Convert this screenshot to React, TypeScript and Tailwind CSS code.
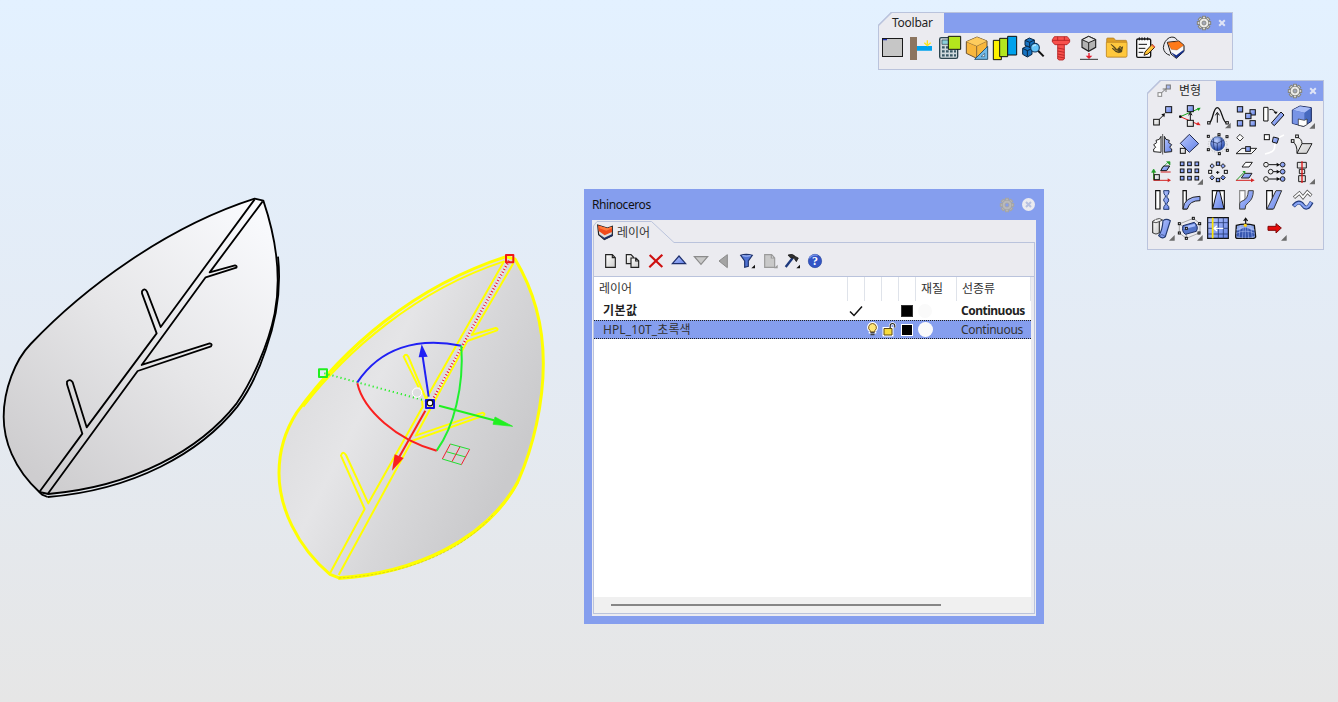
import React from 'react';

type Pt = [number, number];

const leafA =
  'M790 32C830 150 845 260 824 370 805 465 755 575 710 640 600 780 400 890 145 912L118 906C40 835 11 750 11 680 11 600 45 510 92 462 250 295 500 110 764 26Z';
const leafAEdge = 'M834 200C845 300 829 390 797 480 774 550 749 600 712 650 600 790 400 900 143 921';

const leafB =
  'M735 57C800 165 820 280 820 370 820 490 790 620 745 722 650 900 430 1000 205 1013L180 1003C80 920 27 800 27 700 27 630 50 565 80 518 220 325 430 140 708 50Z';

function Viewport() {
  return (
    <svg className="absolute inset-0" width="1338" height="702" viewBox="0 0 1338 702">
      <defs>
        <linearGradient id="la" gradientUnits="userSpaceOnUse" x1="780" y1="70" x2="110" y2="860">
          <stop offset="0" stopColor="#f9fafd" />
          <stop offset=".5" stopColor="#e6e6e8" />
          <stop offset="1" stopColor="#cecdcf" />
        </linearGradient>
        <linearGradient id="lb" gradientUnits="userSpaceOnUse" x1="130" y1="450" x2="700" y2="740">
          <stop offset="0" stopColor="#dfdfe1" />
          <stop offset=".25" stopColor="#e5e5e7" />
          <stop offset=".6" stopColor="#d7d7d9" />
          <stop offset="1" stopColor="#cacacc" />
        </linearGradient>
      </defs>
      <g transform="translate(0 190) scale(.33333)" strokeLinejoin="round" stroke="#000" strokeWidth="5.5" fill="none">
        <path d={leafA} fill="url(#la)" />
        <path d={leafAEdge} />
        <path d="M118 906 126 914 143 921" />
        <path d="M764 28 482 411 441 305Q434 292 426 304V310L470 430 260 712 218 577Q210 565 201 575V583L247 731 118 906" />
        <path d="M788 34 629 247 705 226Q712 228 709 233L617 262 425 525 629 460Q638 461 633 469L413 543 143 912" />
      </g>
      <g transform="translate(270 240) scale(.33333)" strokeLinejoin="round" fill="none">
        <g stroke="#ff0" strokeWidth="6">
          <path d={leafB} fill="url(#lb)" strokeWidth="9" />
          <path d="M100 500C228 335 435 152 700 65" strokeWidth="6" />
          <path d="M745 726C650 904 430 1004 205 1017" />
          <path d="M668 826C570 940 400 1005 205 1014" stroke="#b3b31f" strokeWidth="1.5" strokeDasharray="8 4" />
          <path d="M703 62 468 477 415 350Q408 338 401 350L446 442M456 482 458 500 295 790 228 645Q218 631 213 647L284 807 180 1000" />
          <path d="M730 70 605 285 677 264Q686 266 681 271L592 303 437 587 638 518Q647 520 641 527L425 603 206 1005" />
        </g>
        <path d="M717 62 485 485" stroke="#fff" strokeWidth="8" opacity=".4" />
        <path d="M717 62 485 485" stroke="#f01030" strokeWidth="7.5" strokeDasharray="3 6.5" />
        <path d="M163 400 470 483" stroke="#20f020" strokeWidth="6" strokeDasharray="3.500 9" />
        <path d="M262 427C330 325 440 290 574 317" stroke="#2020f4" strokeWidth="6" />
        <path d="M574 317C582 440 552 560 500 632" stroke="#20f030" strokeWidth="6" />
        <path d="M262 430C280 510 380 600 500 632" stroke="#fa2020" strokeWidth="6" />
        <path d="M476 470 458 350" stroke="#2020f4" strokeWidth="6" />
        <path d="M455 313 446 352 473 350Z" fill="#2020f4" />
        <path d="M507 497 672 541" stroke="#20f020" strokeWidth="6" />
        <path d="M728 559 675 531 669 553Z" fill="#20f020" stroke="#20f020" strokeWidth="2" />
        <path d="M466 512 388 650" stroke="#fa2020" strokeWidth="6" />
        <path d="M366 692 374 643 401 654Z" fill="#fa2020" />
        <circle cx="441" cy="458" r="14" stroke="#fff" strokeWidth="3" />
        <g strokeWidth="3">
          <path d="M541 612 599 628M529 635 587 651M517 657 574 674" stroke="#20e030" />
          <path d="M541 612 517 657M570 620 546 665M599 628 574 674" stroke="#f02030" />
        </g>
        <rect x="468" y="480" width="24" height="24" fill="#f4ec80" stroke="#1010e0" strokeWidth="6" />
        <circle cx="480" cy="489" r="8.5" fill="#fff" stroke="#111" strokeWidth="3.500" />
        <rect x="708" y="45" width="22" height="22" stroke="#f01818" strokeWidth="6" />
        <rect x="147" y="388" width="24" height="23" stroke="#20f020" strokeWidth="6" />
      </g>
    </svg>
  );
}

function Gradients() {
  return (
    <svg className="absolute size-0">
      <defs>
        <linearGradient id="blu" x1="0" y1="0" x2="1" y2="1">
          <stop offset="0" stopColor="#b9c8ff" />
          <stop offset="1" stopColor="#6281e6" />
        </linearGradient>
        <linearGradient id="gry" x1="0" y1="0" x2="1" y2="1">
          <stop offset="0" stopColor="#fff" />
          <stop offset="1" stopColor="#ccc" />
        </linearGradient>
        <radialGradient id="ball" cx=".4" cy=".3" r=".7">
          <stop offset="0" stopColor="#c3d5ff" />
          <stop offset="1" stopColor="#2448b0" />
        </radialGradient>
      </defs>
    </svg>
  );
}

const B = 'url(#blu)';
const G = 'url(#gry)';

function Cog({ size = 16, fill = '#ecebe8', stroke = '#85857d', hole = '#a3a8b9' }: { size?: number; fill?: string; stroke?: string; hole?: string }) {
  return (
    <svg width={size} height={size} viewBox="-12 -12 24 24" className="shrink-0">
      <g fill={fill} stroke={stroke} strokeWidth="1.6" strokeLinejoin="round">
        {[0, 45, 90, 135].map((a) => (
          <rect key={a} x="-2.3" y="-10" width="4.6" height="20" transform={`rotate(${a})`} />
        ))}
        <circle r="7.2" />
      </g>
      <circle r="6.4" fill={fill} />
      <circle r="3" fill={hole} stroke={stroke} strokeWidth="1.3" />
    </svg>
  );
}

function CloseX() {
  return (
    <svg width="8" height="8" viewBox="0 0 8 8" className="shrink-0">
      <path d="M1.2 1.2 6.8 6.8M6.8 1.2 1.2 6.8" stroke="#dfe4f6" strokeWidth="2" />
    </svg>
  );
}

/** Rows of little squares used by several array tools. */
function Sq({ at, s = 12, fill = B }: { at: Pt[]; s?: number; fill?: string }) {
  return (
    <>
      {at.map(([x, y]) => (
        <rect key={`${x}-${y}`} x={x} y={y} width={s} height={s} fill={fill} stroke="#111" strokeWidth="3" />
      ))}
    </>
  );
}

const Corner = ({ x, y }: { x: number; y: number }) => <path d={`M${x} ${y}v-17l-17 17z`} fill="#6b6b6b" stroke="none" />;

const mainIcons: React.ReactNode[] = [
  <>
    <rect x="37.500" y="100.500" width="60" height="54" fill="#c6c6c6" stroke="#1a1a1a" strokeWidth="3" />
    <path d="M39 104h12" stroke="#2030b0" strokeWidth="4" />
  </>,
  <>
    <path d="M120 96h21v69h-21z" fill="#8c7560" />
    <path d="M141 123h45v14h-45z" fill="#00a2ec" />
    <path d="M172 106v14M163 113l9 9 10-9" stroke="#fce51a" strokeWidth="4" fill="none" />
  </>,
  <>
    <rect x="209" y="98" width="54" height="62" rx="5" fill="#cfd9dd" stroke="#2c444e" strokeWidth="4" />
    <path d="M216 105h22v13h-22z" fill="#8cd0da" stroke="#2c444e" strokeWidth="2" />
    <path d="M216 127h8M228 127h8M216 139h8M228 139h8M240 139h8M216 151h8M228 151h8M240 151h8M252 139h6M252 151h6" stroke="#3a5966" strokeWidth="7" />
    <path d="M235 94h37v39h-37z" fill="#b4e61d" stroke="#111" strokeWidth="3" />
  </>,
  <>
    <path d="M289 110 321 96 351 108V143L320 160 289 145Z" fill="#f8b73c" stroke="#6b5130" strokeWidth="3" />
    <path d="M289 110 320 123 351 108M320 123V160" fill="none" stroke="#8a6833" strokeWidth="3" />
    <path d="M289 110 321 96 351 108 320 123Z" fill="#ffd165" opacity=".8" />
    <path d="M353 124V163H314Z" fill="#70b9e8" stroke="#2b5673" strokeWidth="3" />
    <path d="M344 145v10h-11z" fill="#ebebf0" stroke="#2b5673" strokeWidth="2" />
  </>,
  <g stroke="#111" strokeWidth="3">
    <path d="M370 106h24v58h-24z" fill="#fff200" />
    <path d="M389 100h24v55h-24z" fill="#b4e61d" />
    <path d="M413 94h27v56h-27z" fill="#00a2ec" />
  </g>,
  <>
    <g stroke="#09243f" strokeWidth="3" fill="#1673c2">
      <path d="M465 106 478 99 493 105V120L479 128 465 121Z" />
      <path d="M458 130 471 123 486 131V148L472 156 458 148Z" />
      <path d="M465 106 479 112 493 105M479 112V127M458 130 472 137 486 131M472 137V154" fill="none" />
    </g>
    <circle cx="495" cy="128" r="13" fill="#65c5fa" stroke="#123a63" strokeWidth="3.500" />
    <path d="M505 138 521 154" stroke="#111" strokeWidth="6" />
    <path d="M488 125q4-6 10-5" stroke="#e1f6ff" strokeWidth="3" fill="none" />
  </>,
  <g stroke="#b12020" strokeWidth="2.500" fill="#f8504c">
    <path d="M563 117h20v45l-4 3h-12l-4-3z" />
    <path d="M547 104 553 95H592L599 104V111L591 119H555L547 111Z" />
    <path d="M547 106H599M563 106V95M583 106V95M563 129l20 4M563 138l20 4M563 147l20 4M563 155l20 4" fill="none" />
  </g>,
  <>
    <path d="M636 104 656 94 677 104V127L656 139 636 127Z" fill="#b3b3b3" stroke="#222" strokeWidth="3.500" />
    <path d="M636 104 656 113 677 104 656 94Z" fill="#e2e2e2" stroke="#222" strokeWidth="3" />
    <path d="M656 113V139" stroke="#222" strokeWidth="3" />
    <path d="M657 144v10" stroke="#e31c2c" strokeWidth="4" />
    <path d="M647 152h20l-10 10z" fill="#e31c2c" />
    <path d="M630 163h54" stroke="#333" strokeWidth="3" />
  </>,
  <>
    <path d="M710 102q0-3 3-3h18l6 7h30q3 0 3 3v44q0 3-3 3h-54q-3 0-3-3z" fill="#dfa023" stroke="#a9761b" strokeWidth="2" />
    <path d="M709 112h62v41q0 3-3 3h-56q-3 0-3-3z" fill="#ffc83d" stroke="#b98222" strokeWidth="2" />
    <path d="M723 118 733 125 741 134 751 123 750 130 758 125 755 141 746 143 737 140 726 130 738 134Z" fill="#51451f" stroke="#332b15" strokeWidth="1.500" />
    <path d="M733 134 745 139M748 127 755 133" stroke="#ffc83d" strokeWidth="1.500" />
  </>,
  <>
    <rect x="800" y="102" width="42" height="55" rx="4" fill="#fafafa" stroke="#111" strokeWidth="4" />
    <path d="M808 97v9M816 97v9M824 97v9M833 97v9M806 118h25M806 130h20M806 142h14" stroke="#111" strokeWidth="3" />
    <path d="M825 141 846 118 855 126 834 147 822 151Z" fill="#ffc63a" stroke="#3a2715" strokeWidth="3" />
    <path d="M844 121l8 8 4-4-8-7z" fill="#e8684a" />
  </>,
  <>
    <path d="M922 106Q914 92 898 98 882 107 880 128 882 146 900 151" fill="none" stroke="#222" strokeWidth="3" />
    <path d="M892 112 927 108 942 121V139L919 160 903 147Z" fill="#f8f8f8" stroke="#111" strokeWidth="3" />
    <path d="M893 113 927 109 941 121 921 135 904 133Z" fill="#ff7a1a" stroke="#7c3508" strokeWidth="1" />
    <path d="M902 141 919 151 941 134V140L919 160Z" fill="#17308c" />
  </>,
];

const transformIcons: React.ReactNode[][] = [
  [
    <>
      <path d="M59 132 71 120" stroke="#111" strokeWidth="3" />
      <path d="M75 115l-2 12-9-9z" fill="#111" />
      <Sq at={[[41, 133]]} s={17} fill={G} />
      <Sq at={[[77, 95]]} s={18} />
    </>,
    <>
      <path d="M121 125 174 102" stroke="#18a018" strokeWidth="3" />
      <path d="M121 125 174 148" stroke="#e02020" strokeWidth="3" />
      <path d="M182 98l-11 1 5 9z" fill="#14a01c" />
      <path d="M182 151l-8-11-5 10z" fill="#e02020" />
      <path d="M151 136V115M146 121l5-9 5 9" stroke="#111" strokeWidth="3" fill="none" />
      <circle cx="121" cy="125" r="4" />
      <Sq at={[[142, 92]]} s={18} />
      <Sq at={[[142, 136]]} s={18} fill={G} />
    </>,
    <>
      <path d="M206 145C220 142 218 98 232 98S246 142 261 145" fill="none" stroke="#111" strokeWidth="4" />
      <path d="M232 143V115M226 121l6-9 6 9" fill="none" stroke="#111" strokeWidth="3" />
      <Sq at={[[203, 140], [258, 140]]} s={7} fill="#fff" />
      <Corner x={272} y={160} />
    </>,
    <Sq at={[[292, 95], [330, 104], [317, 115], [292, 137], [330, 137]]} s={16} />,
    <>
      <path d="M371 97h13v41h-13z" fill="#fff" stroke="#111" strokeWidth="3" />
      <path d="M388 104q13-3 18 8" fill="none" stroke="#111" strokeWidth="3" />
      <path d="M400 110h13l-5 8z" fill="#111" />
      <path d="M394 144 423 111 432 120 403 152Z" fill={B} stroke="#111" strokeWidth="3" />
    </>,
    <>
      <path d="M457 105 480 93 514 98V139L491 154 457 145Z" fill="#4669bf" stroke="#18265c" strokeWidth="3" />
      <path d="M458 105 480 94 513 99 493 113Z" fill="#a9bdf8" />
      <path d="M458 105 493 113V153L458 145Z" fill="#7894e6" />
      <path d="M475 132 493 136 501 132V149L491 154 475 151Z" fill="#fff" stroke="#222" strokeWidth="2" />
      <Corner x={525} y={161} />
    </>,
  ],
  [
    <>
      <path d="M63 184V232L41 230V222L47 217 41 209 50 203 48 196 58 193Z" fill="#fff" stroke="#222" strokeWidth="3" />
      <path d="M73 184V232L95 230V222L89 217 95 209 86 203 88 196 78 193Z" fill={B} stroke="#222" strokeWidth="3" />
      <path d="M68 178V239" stroke="#111" strokeWidth="3" strokeDasharray="4 2" />
    </>,
    <>
      <path d="M148 178 176 206 148 232 121 205Z" fill={B} stroke="#20284a" strokeWidth="3" />
      <Sq at={[[121, 220]]} s={15} fill={G} />
    </>,
    <>
      <ellipse cx="233" cy="208" rx="28" ry="24" fill="none" stroke="#aaa" strokeWidth="2" strokeDasharray="4 4" />
      <circle cx="233" cy="206" r="21" fill="url(#ball)" stroke="#254580" strokeWidth="2" />
      <path d="M213 199 232 205 252 195M232 205V227M220 190Q220 215 224 224M243 188Q247 205 243 223" fill="none" stroke="#16275d" strokeWidth="2" />
      <Sq at={[[202, 181], [234, 176], [258, 182], [202, 221], [235, 233], [259, 223]]} s={6} fill="#fff" />
    </>,
    <>
      <path d="M300 178 310 188 300 198 290 188Z" fill="#fff" stroke="#333" strokeWidth="3" />
      <path d="M288 236 306 220H350L334 236Z" fill="#f7f7f7" stroke="#222" strokeWidth="3" />
      <Sq at={[[317, 215]]} s={14} />
    </>,
    <>
      <path d="M375 237Q405 232 404 214 405 190 432 180" fill="none" stroke="#fff" strokeWidth="5" />
      <Sq at={[[373, 179]]} s={15} fill="#fff" />
      <path d="M400 186 416 190 411 205 397 201Z" fill={B} stroke="#111" strokeWidth="3" />
    </>,
    <>
      <path d="M458 200Q472 208 471 235H500L516 206H486Q486 192 472 186" fill={G} stroke="#222" strokeWidth="3" />
      <path d="M471 235 486 206" fill="none" stroke="#222" strokeWidth="3" />
      <Sq at={[[467, 180], [454, 194]]} s={8} fill="#fff" />
    </>,
  ],
  [
    <>
      <path d="M41 67V40M41 67H84" stroke="#d42323" strokeWidth="3" />
      <path d="M41 64V41" stroke="#209c28" strokeWidth="3" />
      <path d="M35 43h12l-6-10zM63 32l22-20M80 11h10v10z" fill="#209c28" stroke="#209c28" strokeWidth="2" />
      <path d="M83 61v12l10-6z" fill="#d42323" />
      <path d="M62 38 71 24H89L80 38Z" fill={B} stroke="#111" strokeWidth="3" />
      <path d="M62 42H92" stroke="#d42323" strokeWidth="3" />
      <Sq at={[[43, 50]]} s={15} fill={G} />
    </>,
    <>
      <Sq at={[[121, 12], [143, 12], [165, 12], [121, 33], [143, 33], [121, 55], [143, 55], [165, 33], [165, 55]]} s={11} />
      <Corner x={189} y={80} />
    </>,
    <>
      <Sq at={[[229, 12], [229, 61]]} s={10} />
      <Sq at={[[253, 37], [206, 37]]} s={9} fill="#fff" />
      <path d="M216 17l7 7-7 7-6-7zM249 17l7 7-7 7-7-7zM216 52l7 7-7 7-6-7zM249 52l7 7-7 7-7-7z" fill={B} stroke="#222" strokeWidth="3" />
      <path d="M233 39v9M228 43h10" stroke="#111" strokeWidth="3" />
    </>,
    <>
      <path d="M306 27 317 13H337L327 27Z" fill="#fff" stroke="#222" strokeWidth="3" />
      <path d="M304 60 314 46H336L327 60Z" fill={B} stroke="#222" strokeWidth="3" />
      <path d="M289 67 312 43" stroke="#209c28" strokeWidth="3" />
      <path d="M307 39h9v9z" fill="#209c28" />
      <path d="M288 67H336" stroke="#d42323" strokeWidth="3" />
      <path d="M333 61v12l11-6z" fill="#d42323" />
    </>,
    <>
      <path d="M386 20h33M399 41h20M386 63h33" stroke="#111" strokeWidth="3" />
      <path d="M410 14l10 6-10 6zM410 35l10 6-10 6zM410 57l10 6-10 6z" fill="#111" />
      <g stroke="#222" strokeWidth="3">
        <g fill="#eee"><circle cx="378" cy="20" r="7" /><circle cx="392" cy="41" r="7" /><circle cx="378" cy="63" r="7" /></g>
        <g fill={B}><circle cx="428" cy="20" r="7" /><circle cx="428" cy="41" r="7" /><circle cx="428" cy="63" r="7" /></g>
      </g>
    </>,
    <>
      <g fill="#e3e3e3" stroke="#222" strokeWidth="3">
        <path d="M472 13h27v17h-27zM478 34h16v13h-16zM476 53h20v18h-20z" />
      </g>
      <path d="M486 10V75" stroke="#e01616" strokeWidth="4" />
      <Corner x={525} y={79} />
    </>,
  ],
  [
    <>
      <path d="M47 98h13v55H47z" fill="#fff" stroke="#111" strokeWidth="3.500" />
      <path d="M71 98H87V102Q86 110 81 113V119Q87 121 86 127T81 135V140Q88 144 87 154H71Q70 145 76 140V134Q71 131 71 126T76 118V113Q71 110 71 98Z" fill={B} stroke="#1e3870" strokeWidth="3" />
    </>,
    <>
      <path d="M129 98h10v55h-10z" fill="#fff" stroke="#111" strokeWidth="3.500" />
      <path d="M129 153Q132 116 180 115V128Q149 127 142 153Z" fill={B} stroke="#222" strokeWidth="3" />
    </>,
    <>
      <path d="M217 98h36v55h-36z" fill="#fff" stroke="#111" strokeWidth="3.500" />
      <path d="M231 99h8l13 53h-34z" fill={B} stroke="#111" strokeWidth="3" />
    </>,
    <>
      <path d="M299 98h16v55h-16z" fill="#fff" stroke="#888" strokeWidth="3.500" />
      <path d="M299 153V137Q300 130 309 128 324 123 325 98H340Q340 123 325 134 315 140 315 153Z" fill={B} stroke="#444" strokeWidth="3" />
    </>,
    <>
      <path d="M380 98h17v55h-17z" fill="#fff" stroke="#111" strokeWidth="3.500" />
      <path d="M408 98h17l-24 55h-20z" fill={B} stroke="#333" strokeWidth="3" />
    </>,
    <>
      <path d="M462 119 478 105 489 118 502 102 514 113" fill="none" stroke="#555" strokeWidth="10" />
      <path d="M463 118 478 105 489 118 502 102 513 112" fill="none" stroke="#fff" strokeWidth="5" />
      <path d="M460 145 Q477 124 489 142T515 132" fill="none" stroke="#223a7c" strokeWidth="12" />
      <path d="M462 144 Q477 126 489 142T513 133" fill="none" stroke="#88a4f4" strokeWidth="7" />
    </>,
  ],
  [
    <>
      <path d="M38 191V224Q48 232 58 224V190Q48 181 38 191Z" fill={G} stroke="#333" strokeWidth="3.500" />
      <path d="M39 192Q48 197 57 191L68 186Q58 178 48 184" fill="#eee" stroke="#333" strokeWidth="2.500" />
      <path d="M69 188Q79 180 91 188L76 236Q68 245 56 233Q67 218 69 188Z" fill={B} stroke="#253b70" strokeWidth="3.500" />
      <path d="M59 234Q64 225 76 236" fill="none" stroke="#253b70" strokeWidth="2" />
      <Corner x={104} y={248} />
    </>,
    <>
      <path d="M118 198 160 181 180 197 180 224 139 241 118 225ZM118 198 139 210 180 197M139 210V241" fill="none" stroke="#999" strokeWidth="2.500" />
      <path d="M129 203 163 193Q177 206 169 220L136 229Q124 220 129 203Z" fill="#5474c8" stroke="#1c2d64" strokeWidth="3" />
      <path d="M134 205 164 197 166 205 132 214Z" fill="#a9bfff" />
      <Sq at={[[157, 178], [115, 194], [176, 194], [136, 208], [115, 222], [136, 238], [174, 222]]} s={6} fill="#fff" />
      <Corner x={188} y={248} />
    </>,
    <>
      <path d="M203 179h62v62h-62z" fill={B} stroke="#111" strokeWidth="3.500" />
      <path d="M203 194H265M203 211H265M203 228H265M250 179V241M235 179V241" stroke="#263b74" strokeWidth="2.500" />
      <path d="M218 179v62" stroke="#ffe500" strokeWidth="5" />
      <path d="M222 211h28M231 203l-9 8 9 8" fill="none" stroke="#fff" strokeWidth="4" />
    </>,
    <>
      <path d="M289 202Q316 195 343 202L347 237Q345 241 341 241H290Q286 240 287 235Z" fill="#8fa8e9" stroke="#111" strokeWidth="4" />
      <path d="M291 218Q302 217 316 203 330 217 343 218V235Q316 243 290 235Z" fill="#3655af" />
      <path d="M301 202 297 240M310 208 307 241M323 208 326 241M332 202 337 240M288 226Q316 213 345 226M288 216Q316 200 344 216M316 205V241" stroke="#b9cbff" strokeWidth="1.500" fill="none" />
      <path d="M317 200V184M311 189l6-8 6 8" stroke="#111" strokeWidth="3.500" fill="none" />
      <circle cx="316" cy="202" r="5" fill="#ffd51a" />
    </>,
    <>
      <path d="M384 205H408V197L424 210 408 225V217H384Z" fill="#e40b0b" stroke="#7e0909" strokeWidth="3" />
      <Corner x={440} y={248} />
    </>,
  ],
];

function ToolWindow({ className, tab, title, icon, children }: { className: string; tab: string; title: string; icon?: React.ReactNode; children: React.ReactNode }) {
  return (
    <section className={`absolute flex flex-col border border-[#bac3dc] bg-[#ebebf0] ${className}`} style={{ clipPath: 'polygon(0 13px, 13px 0, 100% 0, 100% 100%, 0 100%)' }}>
      <svg className="absolute -top-px -left-px" width="14" height="14" viewBox="0 0 14 14">
        <path d="M0 13.500 13.500 0" stroke="#bac3dc" strokeWidth="2" />
      </svg>
      <header className="flex h-[20px] shrink-0 bg-[#859eee]">
        <div className={`flex items-center bg-[#ebebf0] text-[12px] text-[#1f1f1f] ${tab}`}>
          {icon}
          <span className={icon ? 'pl-[7px]' : 'pl-[13px] tracking-[-0.25px]'}>{title}</span>
        </div>
        <div className="flex flex-1 items-center justify-end gap-[6px] pr-[6px]">
          <Cog />
          <CloseX />
        </div>
      </header>
      {children}
    </section>
  );
}

function MainToolbar() {
  return (
    <ToolWindow className="top-[12px] left-[878px] h-[58px] w-[355px]" tab="w-[65px]" title="Toolbar">
      <div className="-ml-px flex pt-px">
        {mainIcons.map((icon, i) => (
          <svg key={i} width="28" height="28" viewBox={`${24 + 84 * i} 87 84 84`}>{icon}</svg>
        ))}
      </div>
    </ToolWindow>
  );
}

function TransformToolbar() {
  const tabIcon = (
    <svg className="ml-[9px] shrink-0" width="15" height="14" viewBox="52 28 45 42">
      <path d="M64 56 78 43M69 43h10v9" stroke="#777" strokeWidth="3" fill="none" />
      <rect x="55" y="54" width="11" height="11" fill="#fff" stroke="#888" strokeWidth="3" />
      <rect x="80" y="31" width="12" height="12" fill="#a9b9ef" stroke="#777" strokeWidth="3" />
    </svg>
  );
  return (
    <ToolWindow className="top-[80px] left-[1147px] h-[170px] w-[177px]" tab="w-[68px]" title="변형" icon={tabIcon}>
      <div className="grid grid-cols-[repeat(6,28px)] pt-px">
        {transformIcons.flatMap((row, r) =>
          row.map((icon, c) => (
            <svg key={`${r}-${c}`} width="28" height="28" viewBox={`${24 + 84 * c} ${r < 2 ? 81 + 84 * r : 84 * (r - 2)} 84 84`}>{icon}</svg>
          )),
        )}
      </div>
    </ToolWindow>
  );
}

/** Toolbar of the layer list; the strip is drawn in one 3:1 coordinate space. */
const layerTools: [number, number, React.ReactNode][] = [
  [60, 66, <path key="n" d="M77 209H97L106 218V247H77Z M97 209V218H106" fill={G} stroke="#222" strokeWidth="3.500" />],
  [126, 66, <g key="c" fill={G} stroke="#222" strokeWidth="3.500"><path d="M139 209H153L160 216V236H139Z" /><path d="M153 219H168L176 227V247H153Z M167 219V228H176" /></g>],
  [192, 72, <path key="x" d="M209 210 247 246M247 209 208 247" fill="none" stroke="#ce1010" strokeWidth="6.500" />],
  [264, 66, <path key="u" d="M277 236 297 213 317 236Z" fill={B} stroke="#1e2f6d" strokeWidth="3.500" />],
  [330, 66, <path key="d" d="M343 215H383L363 238Z" fill="#c9c9c9" stroke="#8b8b8b" strokeWidth="3.500" />],
  [396, 66, <path key="l" d="M442 209V248L417 228Z" fill="#a4a4a4" stroke="#8b8b8b" strokeWidth="3" />],
  [462, 75, <g key="f"><path d="M482 211Q498 205 517 211L505 228V244L494 247V228Z" fill="#4f72d2" stroke="#20346e" strokeWidth="3.500" /><path d="M487 212Q499 215 512 212" stroke="#b7caff" strokeWidth="3" fill="none" /><path d="M525 250v-11l-11 11z" fill="#111" /></g>],
  [537, 66, <g key="g"><path d="M554 209H575L584 219V247H554Z M574 209V219H584" fill="#c9c9c9" stroke="#9a9a9a" strokeWidth="3.500" /><path d="M593 250v-11l-11 11z" fill="#999" /></g>],
  [603, 69, <g key="h"><path d="M617 246 638 219" stroke="#1d397d" strokeWidth="7" /><path d="M624 210Q638 204 647 215L655 219 649 230 642 220 631 218Z" fill="#303030" stroke="#111" strokeWidth="2" /><path d="M660 250v-11l-11 11z" fill="#111" /></g>],
  [672, 66, <g key="q"><circle cx="705" cy="228" r="20" fill="#3355c6" stroke="#27459b" strokeWidth="2" /><path d="M688 220Q696 207 713 211" stroke="#7690e4" strokeWidth="4" fill="none" /><text x="705" y="240" textAnchor="middle" fontSize="36" fontWeight="700" fill="#fff" fontFamily="Liberation Serif, serif">?</text></g>],
];

const colWidths = 'grid grid-cols-[254px_17px_17px_17px_17px_41px_74px]';

function LayerWindow() {
  return (
    <section className="absolute top-[189px] left-[584px] flex h-[435px] w-[460px] flex-col bg-[#859eee] px-[8px] pb-[8px]">
      <header className="flex h-[31px] shrink-0 items-center text-[12px] text-[#111]">
        <span className="flex-1 tracking-[-0.42px]">Rhinoceros</span>
        <Cog size={16} fill="#b9b9b9" stroke="#a5a5a5" hole="#859eee" />
        <svg className="mr-[1px] ml-[7px]" width="13" height="13" viewBox="0 0 13 13">
          <circle cx="6.500" cy="6.500" r="6.500" fill="#ebebf0" />
          <path d="M4 4 9 9M9 4 4 9" stroke="#b7c1e0" strokeWidth="2" />
        </svg>
      </header>
      <div className="flex flex-1 flex-col bg-[#ebebf0] px-px pb-[2px]">
        <div className="relative flex h-[22px] shrink-0 items-center pt-[3px]">
          <svg className="absolute top-px left-0" width="442" height="22" viewBox="0 0 442 22">
            <path d="M.5 22V5L4 .5H58.500L81 21.500H442" fill="none" stroke="#bac3dc" />
          </svg>
          <svg className="ml-[4px]" width="17" height="17" viewBox="52 118 51 51">
            <path d="M54 121 83 130 98 125V153L74 165 57 150Z" fill="#ddd" stroke="#222" strokeWidth="3.500" />
            <path d="M55 122 83 131 97 126V142L75 152 57 139Z" fill="#f04a1c" />
            <path d="M58 124 83 131 97 126V131L80 138 60 131Z" fill="#ff7b3c" />
            <path d="M58 148 74 159 98 148V154L74 165Z" fill="#1a2d66" />
          </svg>
          <span className="relative ml-[3px] text-[12px] text-[#333]">레이어</span>
        </div>
        <div className="flex flex-1 flex-col border border-t-0 border-[#bac3dc]">
          <div className="flex h-[35px] shrink-0 items-center border-b border-[#bac3dc] pt-[3px] pl-[6px]">
            {layerTools.map(([x, w, node]) => (
              <svg key={x} width={w / 3} height="20" viewBox={`${x} 198 ${w} 60`} className="shrink-0">{node}</svg>
            ))}
          </div>
          <div className="flex w-[437px] flex-1 flex-col bg-white text-[12px] text-[#222]">
            <div className={`${colWidths} h-[24px] items-stretch leading-[24px] text-[#333]`}>
              <span className="border-r border-[#dfe3ea] pl-[5px]">레이어</span>
              <span className="border-r border-[#dfe3ea]" />
              <span className="border-r border-[#dfe3ea]" />
              <span className="border-r border-[#dfe3ea]" />
              <span className="border-r border-[#dfe3ea]" />
              <span className="border-r border-[#dfe3ea] pl-[5px]">재질</span>
              <span className="border-r border-[#dfe3ea] pl-[5px]">선종류</span>
            </div>
            <div className={`${colWidths} h-[19px] items-center font-bold leading-[18px]`}>
              <span className="pl-[9px] tracking-[0.5px]">기본값</span>
              <svg width="16" height="14" viewBox="0 0 16 14"><path d="M2 7.500 6 11.500 14 2.500" fill="none" stroke="#111" strokeWidth="1.500" /></svg>
              <span />
              <span />
              <span className="ml-[2px] size-[12px] border border-[#333] bg-black" />
              <span className="ml-[2px] size-[14px] rounded-full bg-[#fafafa]" />
              <span className="pl-[4px] tracking-[-0.5px]">Continuous</span>
            </div>
            <div className={`${colWidths} h-[19px] items-center border-y border-dotted border-[#222] bg-[#859eee] leading-[17px] text-[#333]`}>
              <span className="pl-[9px] tracking-[0.1px]">HPL_10T_초록색</span>
              <span />
              <svg width="17" height="15" viewBox="0 0 17 15">
                <path d="M7.500 1.500a4 4 0 0 0-2.300 7.200V10h4.600V8.700A4 4 0 0 0 7.500 1.500Z" fill="#ffe779" stroke="#fff" strokeWidth="3" />
                <path d="M7.500 1.500a4 4 0 0 0-2.300 7.200V10h4.600V8.700A4 4 0 0 0 7.500 1.500Z" fill="#ffe779" stroke="#795515" />
                <path d="M5.500 10.500h4M5.500 12.500h4" stroke="#444" strokeWidth="1.300" />
              </svg>
              <svg width="17" height="15" viewBox="0 0 17 15">
                <path d="M2 6.500h8v6.500H2z" fill="none" stroke="#fff" strokeWidth="3" />
                <path d="M8.200 6.500V3.800a2.300 2.300 0 0 1 4.600 0V5.500" fill="none" stroke="#fff" strokeWidth="2.600" />
                <path d="M8.200 6.500V3.800a2.300 2.300 0 0 1 4.600 0V5.500" fill="none" stroke="#222" strokeWidth="1.200" />
                <path d="M2 6.500h8v6.500H2z" fill="#f8dc3c" stroke="#5b4815" />
              </svg>
              <span className="ml-[2px] size-[12px] border border-white bg-black" />
              <span className="ml-[2px] size-[15px] rounded-full bg-[#fafafa]" />
              <span className="pl-[4px] tracking-[-0.3px]">Continuous</span>
            </div>
            <div className="flex-1" />
            <div className="flex h-[16px] items-center bg-[#f0f0f0] pl-[17px]">
              <div className="h-[2px] w-[330px] bg-[#868686]" />
            </div>
          </div>
        </div>
      </div>
    </section>
  );
}

export default function App() {
  return (
    <main className="relative h-[702px] w-[1338px] overflow-hidden bg-linear-to-b from-[#e3f1ff] via-[#e4ebf4] to-[#e6e6e6] font-['Noto_Sans','Noto_Sans_CJK_KR',sans-serif]">
      <Gradients />
      <Viewport />
      <MainToolbar />
      <TransformToolbar />
      <LayerWindow />
    </main>
  );
}
